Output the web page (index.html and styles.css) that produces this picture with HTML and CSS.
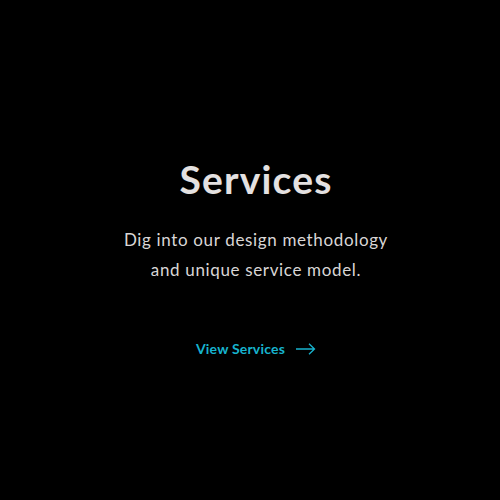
FILE: index.html
```html
<!DOCTYPE html>
<html>
<head>
<meta charset="utf-8">
<link rel="stylesheet" href="styles.css">
</head>
<body>
<section class="hero">
  <h1 class="title">Services</h1>
  <p class="lead">Dig into our design methodology<br>and unique service model.</p>
  <a class="link" href="#">View Services
    <svg class="arrow" width="20" height="12" viewBox="0 0 20 12" fill="none" stroke="currentColor" stroke-width="1.3">
      <path d="M0 6H18.5M13 0.8L18.5 6L13 11.2"/>
    </svg>
  </a>
</section>
</body>
</html>
```
FILE: styles.css
```css
html, body {
  margin: 0;
  padding: 0;
  background: #000;
}
.hero {
  width: 500px;
  height: 500px;
  display: flex;
  flex-direction: column;
  align-items: center;
  font-family: "Lato", sans-serif;
  padding: 155px 0 0 12px;
  box-sizing: border-box;
}
.title {
  margin: 0;
  font-size: 39px;
  font-weight: 700;
  letter-spacing: 1.2px;
  color: #e4e1e1;
  line-height: 48px;
}
.lead {
  margin: 22px 0 0;
  font-size: 17px;
  line-height: 30px;
  letter-spacing: 0.65px;
  color: #d9d6d6;
  text-align: center;
}
.link {
  margin-top: 55px;
  display: flex;
  align-items: center;
  gap: 11px;
  color: #17b3ce;
  font-size: 14px;
  font-weight: 700;
  letter-spacing: 0.2px;
  text-decoration: none;
}
.arrow {
  display: block;
}
```
